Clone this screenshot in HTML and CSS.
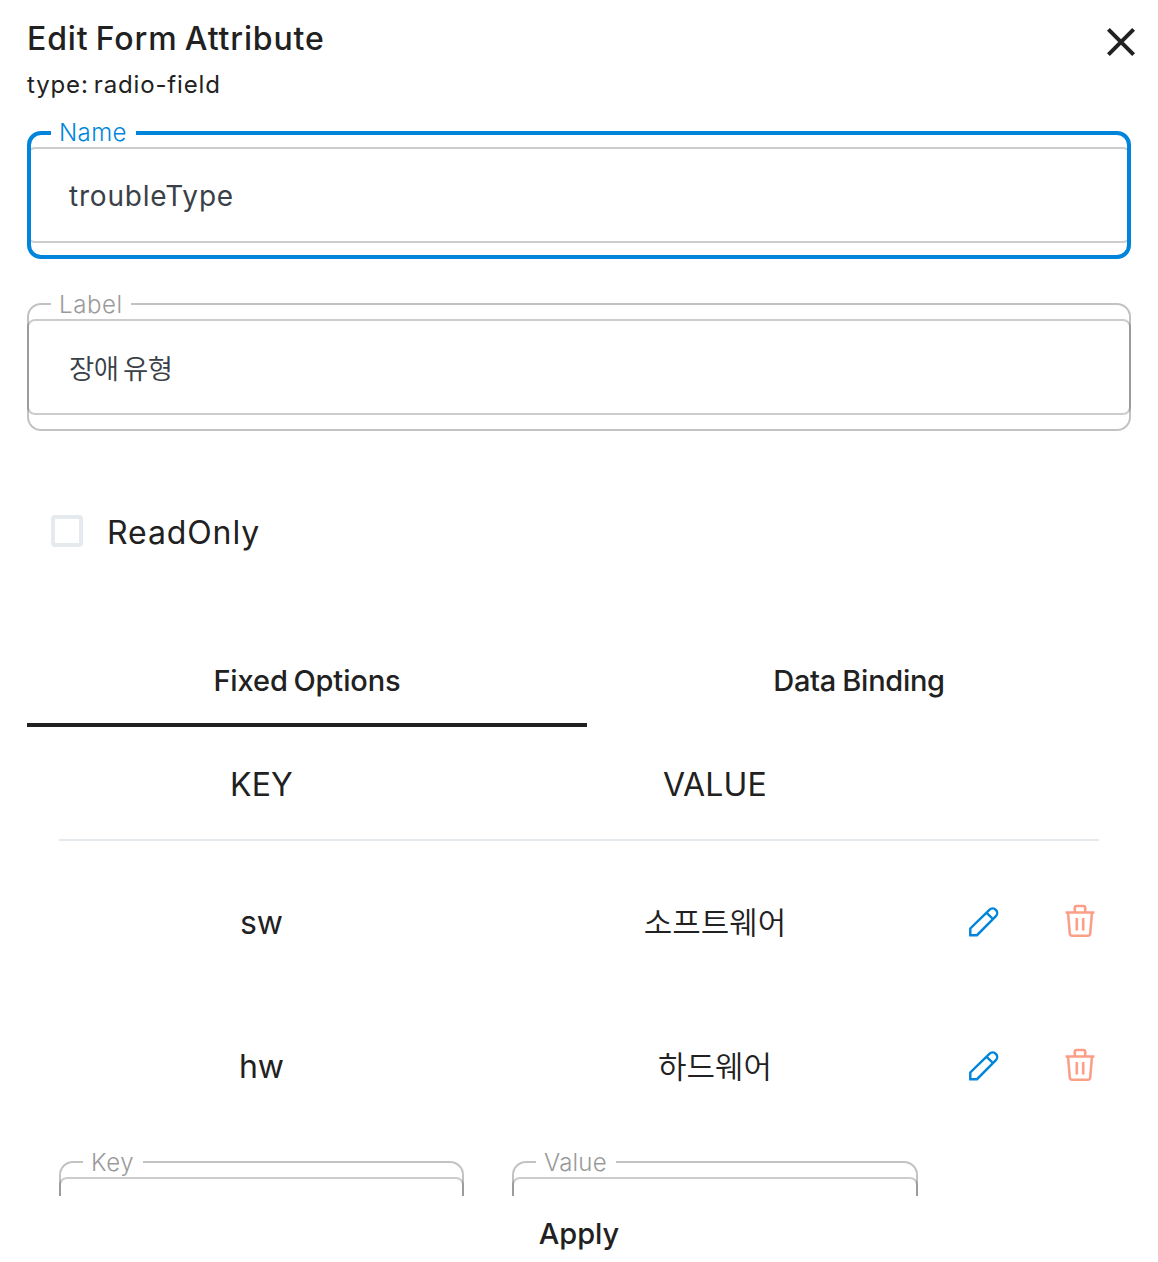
FILE: index.html
```html
<!DOCTYPE html>
<html lang="ko">
<head>
<meta charset="utf-8">
<title>Edit Form Attribute</title>
<link rel="stylesheet" href="styles.css">
</head>
<body>
<main class="panel">
  <header class="panel-header">
    <div>
      <h1 class="title">Edit Form Attribute</h1>
      <p class="subtitle">type: radio-field</p>
    </div>
    <button class="close" aria-label="Close">
      <svg width="32" height="32" viewBox="0 0 32 32"><path d="M3.4 3.4L28.6 28.6M28.6 3.4L3.4 28.6" fill="none" stroke="#212121" stroke-width="4"/></svg>
    </button>
  </header>

  <section class="panel-body">
    <fieldset class="field focused">
      <legend class="legend legend-name"><span>Name</span></legend>
      <div class="control"><span class="value-en">troubleType</span></div>
    </fieldset>
    <fieldset class="field">
      <legend class="legend legend-label"><span>Label</span></legend>
      <div class="control"><span class="value-ko">장애 유형</span></div>
    </fieldset>

    <label class="check"><span class="box"></span><span class="check-text">ReadOnly</span></label>

    <nav class="tabs">
      <button class="tab active"><span class="tab-fixed">Fixed Options</span></button>
      <button class="tab"><span class="tab-data">Data Binding</span></button>
    </nav>

    <div class="options">
      <div class="row head"><span class="key-head">KEY</span><span class="value-head">VALUE</span></div>
      <div class="row item">
        <span class="latin">sw</span><span class="korean">소프트웨어</span>
        <div class="actions">
          <svg class="icon" viewBox="0 0 32 32"><path d="M2.3 29.2V22.5L21.4 3.9A4.5 4.5 0 0 1 27.9 10.2L9 29.2ZM18.6 6.8L25 13" fill="none" stroke="#0085db" stroke-width="2.4"/></svg>
          <svg class="icon" viewBox="0 0 32 32"><path d="M1.5 6.5H30.5M4 6.5L5.8 27.5Q6 29.8 8.3 29.8H23.7Q26 29.8 26.2 27.5L28 6.5M10.8 6.5V1.8Q10.8 0 12.6 0H19.4Q21.2 0 21.2 1.8V6.5M12.8 12V24.5M19.2 12V24.5" fill="none" stroke="#fb9f87" stroke-width="2.6"/></svg>
        </div>
      </div>
      <div class="row item">
        <span class="latin">hw</span><span class="korean">하드웨어</span>
        <div class="actions">
          <svg class="icon" viewBox="0 0 32 32"><path d="M2.3 29.2V22.5L21.4 3.9A4.5 4.5 0 0 1 27.9 10.2L9 29.2ZM18.6 6.8L25 13" fill="none" stroke="#0085db" stroke-width="2.4"/></svg>
          <svg class="icon" viewBox="0 0 32 32"><path d="M1.5 6.5H30.5M4 6.5L5.8 27.5Q6 29.8 8.3 29.8H23.7Q26 29.8 26.2 27.5L28 6.5M10.8 6.5V1.8Q10.8 0 12.6 0H19.4Q21.2 0 21.2 1.8V6.5M12.8 12V24.5M19.2 12V24.5" fill="none" stroke="#fb9f87" stroke-width="2.6"/></svg>
        </div>
      </div>
      <div class="row new">
        <fieldset class="field">
          <legend class="legend legend-key"><span>Key</span></legend>
          <div class="control"></div>
        </fieldset>
        <fieldset class="field">
          <legend class="legend legend-value"><span>Value</span></legend>
          <div class="control"></div>
        </fieldset>
      </div>
    </div>
  </section>

  <footer class="panel-footer"><button class="apply">Apply</button></footer>
</main>
</body>
</html>
```
FILE: styles.css
```css
* { box-sizing: border-box; }
body {
  margin: 0;
  background: #fff;
  color: #212121;
  font-family: Inter, "Noto Sans CJK KR", sans-serif;
}
button { border: 0; padding: 0; background: none; color: inherit; font: inherit; }
.panel { display: flex; flex-direction: column; height: 1262px; overflow: hidden; }
.panel-header {
  display: flex;
  justify-content: space-between;
  align-items: flex-start;
  height: 119px;
  padding: 19px 21px 0 27px;
}
.title { margin: 0; font-size: 32px; font-weight: 450; line-height: 40px; letter-spacing: .85px; word-spacing: -2px; white-space: nowrap; }
.subtitle { margin: 10px 0 0; font-size: 24px; font-weight: 370; line-height: 32px; letter-spacing: .85px; word-spacing: -2.5px; white-space: nowrap; }
.close { display: flex; margin-top: 7px; }
.panel-body { height: 1077px; overflow: hidden; padding: 0 27px; }

.field {
  --line: 2px;
  min-width: 0;
  margin: 0 0 31px;
  border: var(--line) solid rgba(0, 0, 0, .24);
  border-radius: 14px;
  padding: 1px 0 14px;
}
.legend {
  height: 28px;
  margin-left: 22px;
  padding: 0 0 0 8px;
  line-height: 30px;
  font-size: 24px;
  font-weight: 320;
  color: #9a9a9a;
  white-space: nowrap;
}
.control {
  display: flex;
  align-items: center;
  height: 96px;
  margin: 0 calc(-1 * var(--line));
  padding: 0 40px;
  border: 2px solid rgba(0, 0, 0, .2);
  border-radius: 8px;
  color: #3a4047;
}
.focused { --line: 4px; border-color: #0085db; padding: 0 0 12px; }
.focused .control { clip-path: inset(0 4px); }
.focused .legend { margin-left: 20px; line-height: 28px; color: #0085db; }
.legend-name { width: 85px; letter-spacing: .4px; }
.legend-label { width: 80px; letter-spacing: .6px; }
.legend-key { width: 60px; letter-spacing: .6px; }
.legend-value { width: 80px; letter-spacing: .2px; }
.value-en { padding-top: 2px; font-size: 28px; font-weight: 370; letter-spacing: .8px; }
.value-ko { font-family: "Noto Sans CJK KR", sans-serif; font-size: 27.5px; font-weight: 350; letter-spacing: -.6px; word-spacing: -2.5px; }

.check { display: flex; align-items: center; gap: 24px; height: 40px; margin: 80px 0 0 24px; }
.box { width: 32px; height: 32px; border: 4px solid #e5eaef; border-radius: 4px; }
.check-text { padding-top: 2px; font-size: 32px; font-weight: 370; letter-spacing: .9px; }

.tabs { display: flex; height: 96px; margin-top: 80px; }
.tab { flex: 0 0 544px; height: 96px; padding-top: 2px; font-size: 29px; font-weight: 450; white-space: nowrap; }
.tab.active { flex-basis: 560px; border-bottom: 4px solid #212121; padding-top: 6px; }
.tab-fixed { letter-spacing: -.1px; word-spacing: -2px; }
.tab-data { letter-spacing: -.3px; word-spacing: -1px; }

.options { padding: 0 32px; }
.row { display: grid; grid-template-columns: 405px 406px 1fr; column-gap: 48px; align-items: center; text-align: center; }
.head { height: 114px; padding-top: 2px; border-bottom: 2px solid #e5eaef; font-size: 32px; font-weight: 370; letter-spacing: .2px; }
.item { height: 144px; font-size: 32px; font-weight: 380; }
.item:nth-child(2) { margin-top: 9px; }
.korean { padding-bottom: 4px; font-family: "Noto Sans CJK KR", sans-serif; font-size: 31px; font-weight: 350; }
.actions { display: flex; gap: 64px; padding-left: 2px; }
.icon { width: 32px; height: 32px; overflow: visible; }
.new { margin-top: 10px; text-align: left; }

.panel-footer { display: flex; justify-content: center; align-items: center; height: 66px; }
.apply { margin-top: 10px; font-size: 29px; font-weight: 470; line-height: 40px; }
```
